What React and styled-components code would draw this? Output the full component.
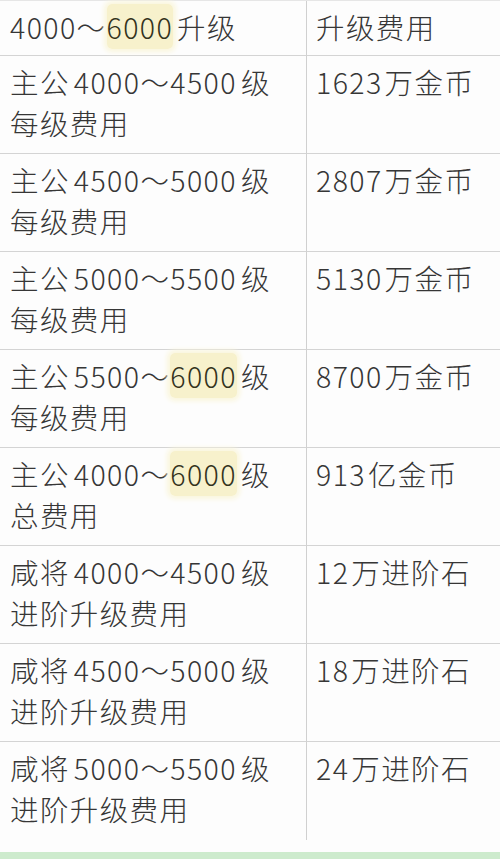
import React from "react";
import styled, { createGlobalStyle } from "styled-components";

const Global = createGlobalStyle`
  html, body { margin: 0; padding: 0; background: #ffffff; }
  body { width: 500px; height: 859px; overflow: hidden; }
`;

const Page = styled.div`
  width: 500px;
  height: 859px;
  display: flex;
  flex-direction: column;
  background: #fdfdfd;
  font-family: "Noto Sans CJK SC", "Noto Sans", sans-serif;
  font-weight: 300;
  color: #363636;
`;

const Table = styled.div`
  display: grid;
  grid-template-columns: 306px 1fr;
  border-top: 1px solid #e6e6e6;
`;

const Cell = styled.div`
  padding: ${(p) => (p.$head ? "5px 0 9px" : "5px 0 11px")};
  padding-left: ${(p) => (p.$right ? "9px" : "10px")};
  border-bottom: ${(p) => (p.$last ? "none" : "1px solid #d4d4d4")};
  border-left: ${(p) => (p.$right ? "1px solid #d0d0d0" : "none")};
  height: ${(p) => (p.$head ? "40px" : "81px")};
  ${(p) => (p.$last ? "padding-bottom: 12px;" : "")}
`;

const Line = styled.div`
  font-size: 28.5px;
  line-height: 41px;
  letter-spacing: 1.4px;
  white-space: nowrap;
`;

const Num = styled.span`
  margin: 0 ${(p) => p.$gap ?? 4}px;
`;

const Hl = styled.span`
  background: #f7f1cc;
  color: #33331c;
  border-radius: 5px;
  box-shadow: 0 0 5px 3px #faf6dd;
  padding: 2px 0;
`;

const Footer = styled.div`
  margin-top: auto;
  height: 7px;
  background: #cdebcd;
`;

const rows = [
  { a: ["主公", "4000", "4500", "级"], b: "每级费用", c: ["1623", "万金币"] },
  { a: ["主公", "4500", "5000", "级"], b: "每级费用", c: ["2807", "万金币"] },
  { a: ["主公", "5000", "5500", "级"], b: "每级费用", c: ["5130", "万金币"] },
  { a: ["主公", "5500", "6000", "级"], b: "每级费用", c: ["8700", "万金币"], hl: true },
  { a: ["主公", "4000", "6000", "级"], b: "总费用", c: ["913", "亿金币"], hl: true },
  { a: ["咸将", "4000", "4500", "级"], b: "进阶升级费用", c: ["12", "万进阶石"] },
  { a: ["咸将", "4500", "5000", "级"], b: "进阶升级费用", c: ["18", "万进阶石"] },
  { a: ["咸将", "5000", "5500", "级"], b: "进阶升级费用", c: ["24", "万进阶石"] },
];

export default function App() {
  return (
    <Page>
      <Global />
      <Table>
        <Cell $head>
          <Line>
            4000～<Hl>6000</Hl>
            <Num $gap={2}>{""}</Num>升级
          </Line>
        </Cell>
        <Cell $head $right>
          <Line>升级费用</Line>
        </Cell>
        {rows.map((r, i) => {
          const last = i === rows.length - 1;
          return (
            <React.Fragment key={i}>
              <Cell $last={last}>
                <Line>
                  {r.a[0]}
                  <Num>
                    {r.a[1]}～{r.hl ? <Hl>{r.a[2]}</Hl> : r.a[2]}
                  </Num>
                  {r.a[3]}
                </Line>
                <Line>{r.b}</Line>
              </Cell>
              <Cell $right $last={last}>
                <Line>
                  {r.c[0]}
                  <Num $gap={1}>{""}</Num>
                  {r.c[1]}
                </Line>
              </Cell>
            </React.Fragment>
          );
        })}
      </Table>
      <Footer />
    </Page>
  );
}
